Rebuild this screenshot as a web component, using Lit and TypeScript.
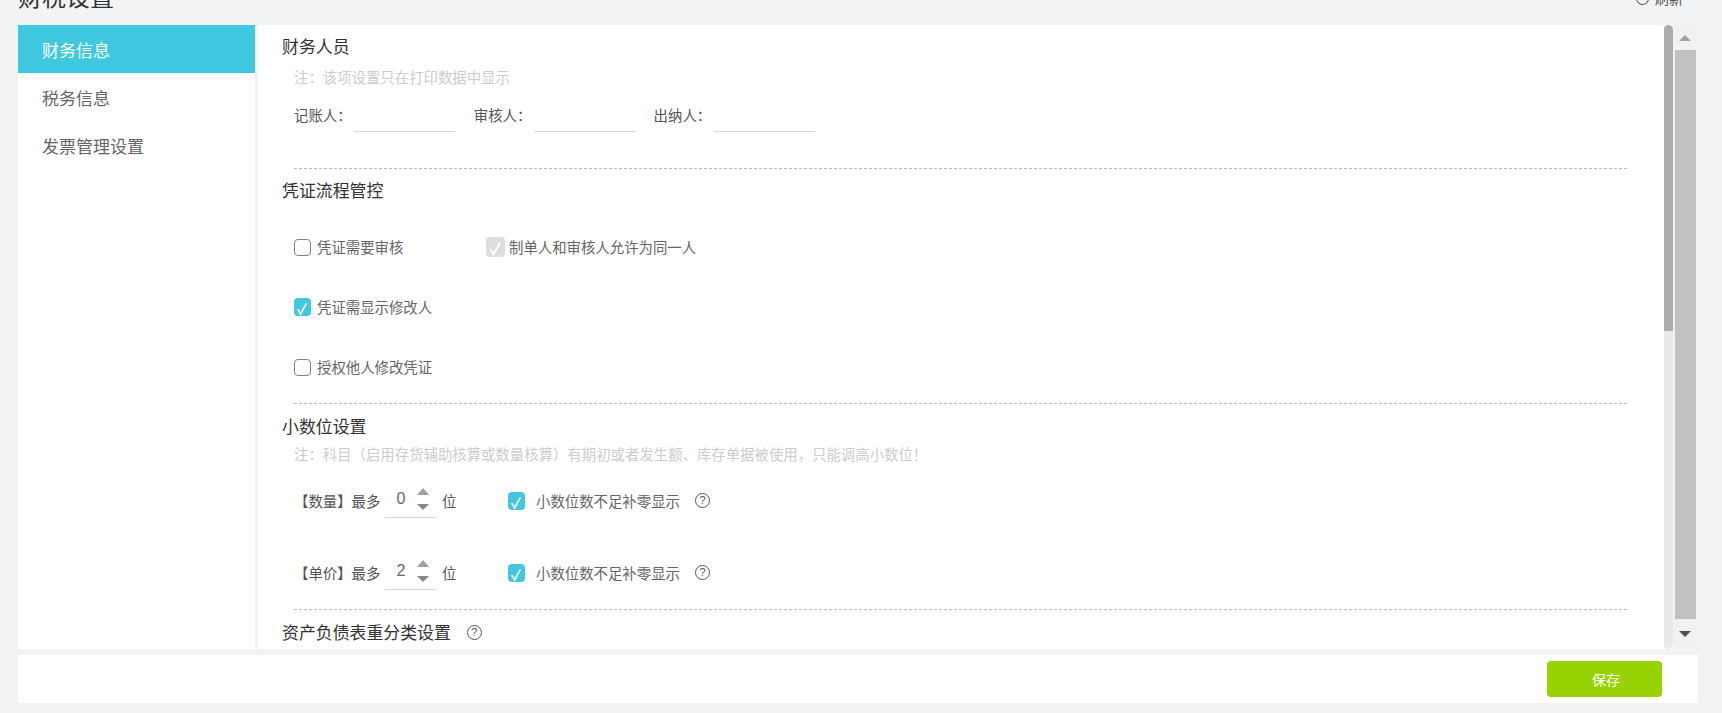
import { LitElement, html, css, svg } from "lit";
import { customElement } from "lit/decorators.js";

const tick = svg`<svg class="tick" viewBox="0 0 17 18"><path d="M3.8 11 L6.6 16 L12.4 5.4" fill="none" stroke="#fff" stroke-width="1.6"/></svg>`;

@customElement("app-root")
export class AppRoot extends LitElement {
  static styles = css`
    :host {
      display: block;
      width: 1722px;
      height: 713px;
      overflow: hidden;
      background: #f2f3f5;
      font-family: "Noto Sans CJK SC", "Liberation Sans", sans-serif;
      color: #666;
      font-size: 14.4px;
    }
    .head {
      height: 25px;
      padding: 0 39px 0 18px;
      display: flex;
      justify-content: space-between;
      overflow: hidden;
    }
    .page-title {
      margin-top: -16px;
      font-size: 24px;
      line-height: 24px;
      color: #333;
    }
    .refresh {
      margin-top: -9px;
      height: 14px;
      display: flex;
      align-items: center;
      gap: 6px;
      font-size: 14px;
      line-height: 14px;
      color: #555;
    }
    .refresh i {
      width: 11px;
      height: 11px;
      border: 1.3px solid #444;
      border-radius: 50%;
    }
    .main {
      height: 624px;
      margin: 0 24px 0 18px;
      display: flex;
      gap: 3px;
    }
    .side {
      width: 237px;
      flex: none;
      background: #fff;
    }
    .side div {
      height: 48px;
      line-height: 50px;
      padding-left: 24px;
      font-size: 17px;
      color: #666;
    }
    .side div.on {
      background: #3fc8df;
      color: #fff;
    }
    .panel {
      flex: 1;
      min-width: 0;
      display: flex;
      background: #fff;
    }
    .body {
      flex: 1;
      min-width: 0;
      overflow: hidden;
      padding: 9px 37px 0 24px;
    }
    h3 {
      margin: 0;
      font-size: 16.9px;
      font-weight: 400;
      line-height: 24px;
      color: #333;
      display: flex;
      align-items: center;
    }
    .sec {
      margin-top: 9px;
    }
    .sec.mid {
      margin-top: 10px;
    }
    .note {
      margin: 9px 0 0 12px;
      line-height: 20px;
      color: #ccc;
    }
    .note.tight {
      margin-top: 6px;
    }
    hr {
      margin: 36px 0 0 12px;
      border: 0;
      border-top: 1px dashed #bbb;
      height: 0;
    }
    .fields {
      margin: 12px 0 0 12px;
      display: flex;
    }
    .fields label {
      width: 60px;
      height: 33px;
      line-height: 31px;
      color: #555;
    }
    .line {
      width: 101px;
      height: 32px;
      border-bottom: 1px solid #d5d5d5;
      margin-right: 18.8px;
    }
    .checks {
      margin: 35px 0 0 12px;
    }
    .check-row {
      display: flex;
      align-items: center;
      height: 20px;
      line-height: 20px;
    }
    .check-row + .check-row {
      margin-top: 40px;
    }
    .opt {
      display: flex;
      align-items: center;
      gap: 6px;
      width: 192px;
    }
    .opt.small {
      gap: 4px;
      width: auto;
    }
    .box {
      width: 17px;
      height: 17px;
      box-sizing: border-box;
      flex: none;
      border-radius: 4px;
      border: 1.7px solid #808080;
      background: #fff;
    }
    .box.on {
      border: 0;
      height: 18px;
      background: #3fc8df;
    }
    .box.off {
      border: 0;
      width: 19px;
      height: 20px;
      background: #ddd;
    }
    .tick {
      display: block;
      width: 100%;
      height: 100%;
    }
    .digits {
      margin-left: 12px;
      display: flex;
      align-items: flex-start;
      height: 35px;
      line-height: 35px;
    }
    .digits.first {
      margin-top: 19px;
    }
    .digits.second {
      margin-top: 37px;
    }
    .digits .lbl {
      width: 91px;
      color: #555;
    }
    .spin {
      box-sizing: border-box;
      width: 52px;
      height: 35px;
      border-bottom: 1px solid #d5d5d5;
      display: flex;
    }
    .spin span {
      width: 32px;
      text-align: center;
      line-height: 31px;
      font-family: "Liberation Sans", sans-serif;
      font-size: 16px;
    }
    .spin svg {
      width: 12px;
      height: 30px;
      margin-top: 5px;
    }
    .unit {
      margin-left: 5px;
      width: 66px;
      color: #555;
    }
    .digits .box {
      margin-top: 9px;
    }
    .digits .txt {
      margin-left: 11px;
      width: 160px;
    }
    .q {
      box-sizing: border-box;
      width: 15px;
      height: 15px;
      flex: none;
      border: 1.4px solid #555;
      border-radius: 50%;
      font: 11px/12.5px "Liberation Sans", sans-serif;
      text-align: center;
      color: #555;
    }
    .digits .q {
      margin-top: 10px;
      margin-left: -1px;
    }
    h3 .q {
      margin-left: 16px;
    }
    .dash2 {
      margin-top: 19px;
    }
    .dash3 {
      margin-top: 26px;
    }
    .sec.last {
      margin-top: 10px;
    }
    .thin {
      width: 9px;
      flex: none;
      background: #e9e9e9;
      border-radius: 5px;
      display: flex;
    }
    .thin i {
      display: block;
      width: 100%;
      height: 306px;
      background: #adadad;
      border-radius: 5px 5px 0 0;
    }
    .track {
      width: 25px;
      flex: none;
      background: #f1f1f1;
      display: flex;
      flex-direction: column;
    }
    .btn {
      height: 25px;
      display: flex;
      align-items: center;
      justify-content: center;
    }
    .btn.down {
      height: 30px;
    }
    .btn svg {
      width: 12px;
      height: 6px;
      margin-left: -1px;
    }
    .thumb {
      flex: 1;
      margin: 0 2px 0 2px;
      background: #c1c1c1;
    }
    .foot {
      height: 48px;
      margin: 6px 24px 0 18px;
      background: #fff;
      display: flex;
      justify-content: flex-end;
      align-items: center;
      padding-right: 36px;
    }
    .save {
      box-sizing: border-box;
      width: 115px;
      height: 36px;
      line-height: 36px;
      padding-left: 3px;
      border-radius: 4px;
      background: #97d300;
      color: #fff;
      font-size: 14px;
      text-align: center;
    }
  `;

  private digitRow(label: string, value: string, cls: string) {
    return html`<div class="digits ${cls}">
      <span class="lbl">${label}</span>
      <div class="spin">
        <span>${value}</span>
        <svg viewBox="0 0 12 30">
          <path d="M6 0 L12 7 H0 Z" fill="#a0a0a0" />
          <path d="M0 16 H12 L6 22 Z" fill="#888" />
        </svg>
      </div>
      <span class="unit">位</span>
      <span class="box on">${tick}</span>
      <span class="txt">小数位数不足补零显示</span>
      <span class="q">?</span>
    </div>`;
  }

  render() {
    return html`
      <div class="head">
        <div class="page-title">财税设置</div>
        <div class="refresh"><i></i><span>刷新</span></div>
      </div>
      <div class="main">
        <nav class="side">
          <div class="on">财务信息</div>
          <div>税务信息</div>
          <div>发票管理设置</div>
        </nav>
        <div class="panel">
          <div class="body">
            <h3>财务人员</h3>
            <div class="note">注：该项设置只在打印数据中显示</div>
            <div class="fields">
              <label>记账人：</label><span class="line"></span>
              <label>审核人：</label><span class="line"></span>
              <label>出纳人：</label><span class="line"></span>
            </div>
            <hr />
            <h3 class="sec">凭证流程管控</h3>
            <div class="checks">
              <div class="check-row">
                <span class="opt"><span class="box"></span>凭证需要审核</span>
                <span class="opt small"><span class="box off">${tick}</span>制单人和审核人允许为同一人</span>
              </div>
              <div class="check-row">
                <span class="opt"><span class="box on">${tick}</span>凭证需显示修改人</span>
              </div>
              <div class="check-row">
                <span class="opt"><span class="box"></span>授权他人修改凭证</span>
              </div>
            </div>
            <hr class="dash3" />
            <h3 class="sec mid">小数位设置</h3>
            <div class="note tight">注：科目（启用存货辅助核算或数量核算）有期初或者发生额、库存单据被使用，只能调高小数位！</div>
            ${this.digitRow("【数量】最多", "0", "first")}
            ${this.digitRow("【单价】最多", "2", "second")}
            <hr class="dash2" />
            <h3 class="sec last">资产负债表重分类设置<span class="q">?</span></h3>
          </div>
          <div class="thin"><i></i></div>
          <div class="track">
            <div class="btn"><svg viewBox="0 0 12 6"><path d="M6 0 L12 6 H0 Z" fill="#a3a3a3" /></svg></div>
            <div class="thumb"></div>
            <div class="btn down"><svg viewBox="0 0 12 6"><path d="M0 0 H12 L6 6 Z" fill="#505050" /></svg></div>
          </div>
        </div>
      </div>
      <div class="foot"><div class="save">保存</div></div>
    `;
  }
}
